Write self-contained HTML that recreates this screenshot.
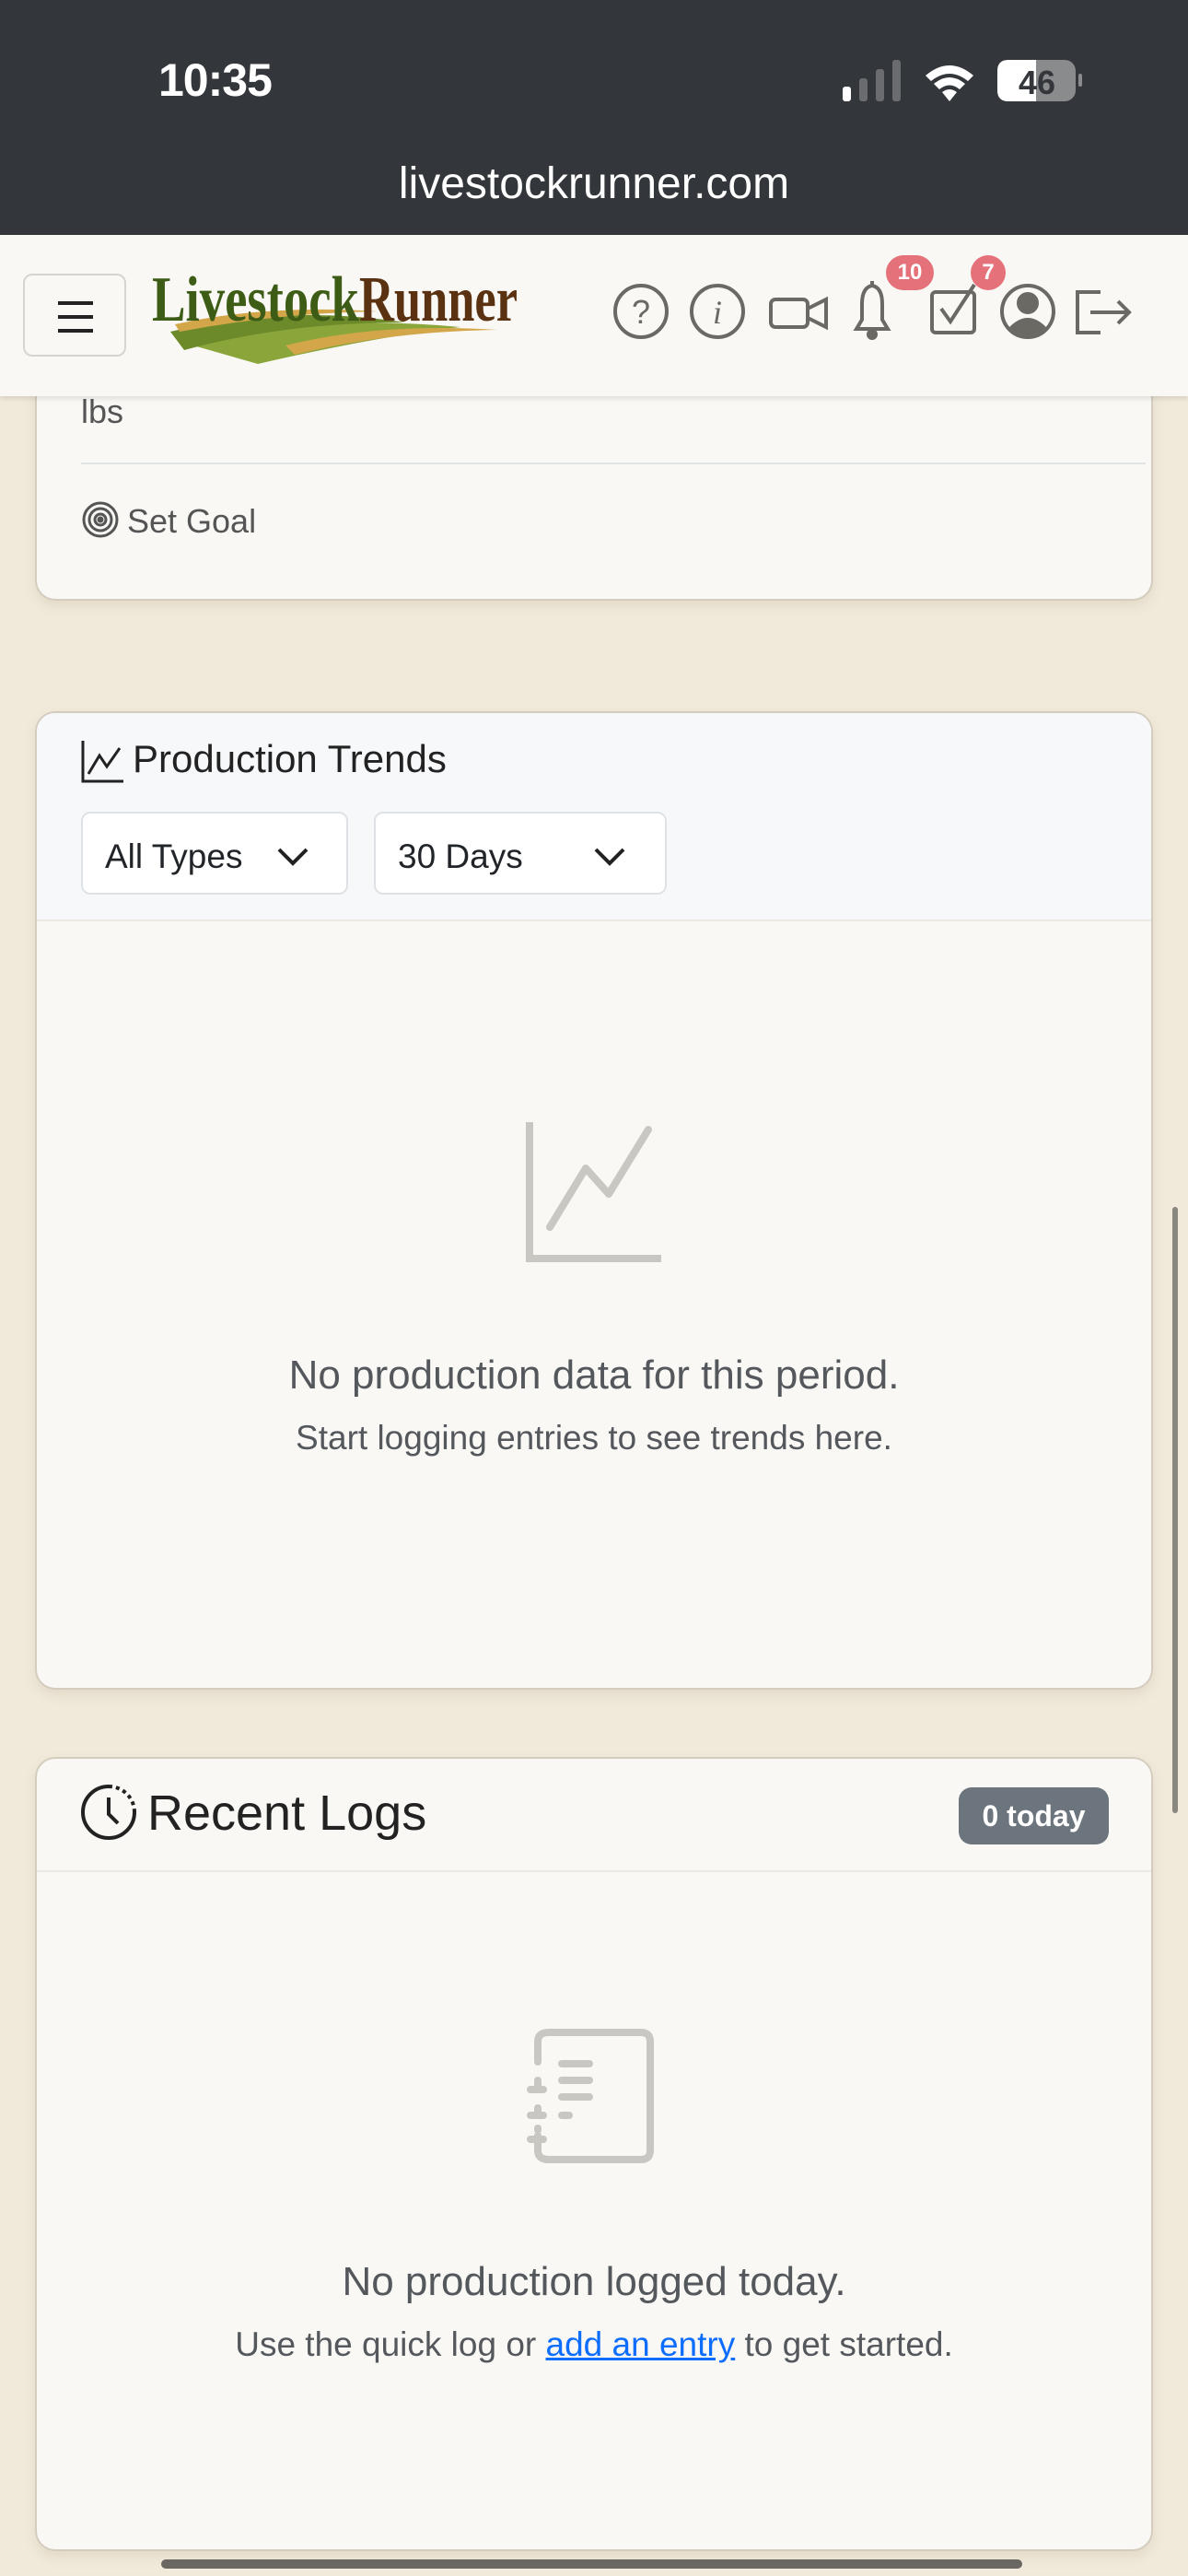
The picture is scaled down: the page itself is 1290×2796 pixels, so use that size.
<!DOCTYPE html>
<html><head><meta charset="utf-8"><style>
*{margin:0;padding:0;box-sizing:border-box}
body{width:1290px;height:2796px;background:#f1eadb;font-family:"Liberation Sans",sans-serif;position:relative;overflow:hidden;color:#212529}
.abs{position:absolute}
.card{position:absolute;left:38px;width:1214px;background:#f9f8f4;border:2px solid #d4cdbf;border-radius:22px;box-shadow:0 6px 14px rgba(120,100,60,.12);overflow:hidden}
.sel{position:absolute;top:881px;height:90px;background:#fff;border:2px solid #dee2e6;border-radius:10px;font-size:37px;color:#212529;padding:26px 0 0 24px}
.c{text-align:center;width:100%;left:0}
</style></head><body>
<div class="abs" style="left:0;top:0;width:1290px;height:255px;background:#33363a"></div>
<div class="abs" style="left:172px;top:58px;font-size:50px;color:#fff;font-weight:bold;letter-spacing:-1px">10:35</div>
<svg class="abs" style="left:910px;top:60px" width="270" height="60" viewBox="0 0 270 60">
<rect x="5" y="34" width="9" height="16" rx="3" fill="#fff"/>
<rect x="23" y="25" width="9" height="25" rx="3" fill="#6a6c6f"/>
<rect x="41" y="15" width="9" height="35" rx="3" fill="#6a6c6f"/>
<rect x="59" y="5" width="9" height="45" rx="3" fill="#6a6c6f"/>
<path d="M95 22 Q121 0 147 22 L141 28 Q121 12 101 28Z M104 31 Q121 17 138 31 L132 37 Q121 28 110 37Z M113 40 Q121 34 129 40 L121 50Z" fill="#fff"/>
<rect x="173" y="5" width="85" height="45" rx="12" fill="#8a8b8d"/>
<path d="M185 5 H215 V50 H185 Q173 50 173 38 V17 Q173 5 185 5Z" fill="#fff"/>
<rect x="261" y="20" width="4" height="14" rx="2" fill="#8a8b8d"/>
<text x="216" y="42" font-size="36" font-weight="bold" text-anchor="middle" fill="#33363a" font-family="Liberation Sans">46</text>
</svg>
<div class="abs c" style="top:172px;font-size:48px;color:#fff">livestockrunner.com</div>

<div class="abs" style="left:0;top:255px;width:1290px;height:175px;background:#f9f8f4;box-shadow:0 3px 5px rgba(0,0,0,.1);z-index:5">
 <div class="abs" style="left:25px;top:42px;width:112px;height:90px;border:2px solid #d6d4cf;border-radius:10px">
  <div class="abs" style="left:36px;top:28px;width:38px;height:4px;background:#222"></div>
  <div class="abs" style="left:36px;top:43px;width:38px;height:4px;background:#222"></div>
  <div class="abs" style="left:36px;top:58px;width:38px;height:4px;background:#222"></div>
 </div>
 <svg class="abs" style="left:160px;top:25px" width="410" height="120" viewBox="0 0 410 120">
  <path d="M50 95 Q180 60 340 75 Q250 85 120 115 Z" fill="#8aa63a"/>
  <path d="M25 80 Q150 50 280 70 Q150 70 40 100 Z" fill="#6d8a2a"/>
  <path d="M30 72 Q130 50 250 58 Q140 60 35 80Z" fill="#d4a64a"/>
  <path d="M150 95 Q250 70 380 78 Q260 80 160 105Z" fill="#d4a64a"/>
  <text x="5" y="68" font-family="Liberation Serif" font-weight="bold" font-size="70" fill="#3d5c15" textLength="225" lengthAdjust="spacingAndGlyphs">Livestock</text>
  <text x="230" y="68" font-family="Liberation Serif" font-weight="bold" font-size="70" fill="#5a3212" textLength="172" lengthAdjust="spacingAndGlyphs">Runner</text>
 </svg>
 <svg class="abs" style="left:660px;top:40px" width="580" height="110" viewBox="0 0 580 110" fill="none" stroke="#6b6963" stroke-width="4">
  <circle cx="36" cy="43" r="28"/><text x="36" y="56" font-size="36" text-anchor="middle" fill="#6b6963" stroke="none" font-family="Liberation Sans">?</text>
  <circle cx="119" cy="43" r="28"/><text x="119" y="56" font-size="36" font-style="italic" text-anchor="middle" fill="#6b6963" stroke="none" font-family="Liberation Serif">i</text>
  <rect x="177" y="30" width="40" height="30" rx="5"/><path d="M217 40 L237 30 V60 L217 50"/>
  <path d="M270 62 H304 L298 52 V35 Q298 17 287 15 Q276 17 276 35 V52 Z"/><circle cx="287" cy="68" r="4" fill="#6b6963"/><path d="M287 10 V15"/>
  <rect x="352" y="22" width="46" height="44" rx="4"/><path d="M362 40 L372 54 L398 14"/>
  <circle cx="456" cy="43" r="28"/><circle cx="456" cy="34" r="10" fill="#6b6963"/><path d="M437 62 Q456 42 475 62 Q456 76 437 62Z" fill="#6b6963"/>
  <path d="M535 22 H510 V66 H535 M524 44 H566 M554 32 L566 44 L554 56"/>
 </svg>
 <div class="abs" style="left:962px;top:22px;width:52px;height:38px;border-radius:19px;background:#e5717a;color:#fff;font-size:24px;font-weight:bold;text-align:center;line-height:38px">10</div>
 <div class="abs" style="left:1054px;top:22px;width:38px;height:38px;border-radius:19px;background:#e5717a;color:#fff;font-size:24px;font-weight:bold;text-align:center;line-height:38px">7</div>
</div>

<div class="card" style="top:300px;height:352px;border-top:none;border-radius:0 0 22px 22px">
 <div class="abs" style="left:48px;top:126px;font-size:36px;color:#555">lbs</div>
 <div class="abs" style="left:48px;top:202px;width:1156px;height:2px;background:#e2e3e5"></div>
 <svg class="abs" style="left:48px;top:243px" width="42" height="42" viewBox="0 0 42 42" fill="none" stroke="#555" stroke-width="3"><circle cx="21" cy="21" r="18"/><circle cx="21" cy="21" r="12"/><circle cx="21" cy="21" r="6"/><circle cx="21" cy="21" r="2" fill="#555"/></svg>
 <div class="abs" style="left:98px;top:245px;font-size:36px;color:#555">Set Goal</div>
</div>

<div class="card" style="top:772px;height:1062px">
 <div class="abs" style="left:0;top:0;width:1214px;height:226px;background:#f7f8fa;border-bottom:2px solid #ebe9e3"></div>
 <svg class="abs" style="left:48px;top:28px" width="48" height="48" viewBox="0 0 48 48" fill="none" stroke="#222" stroke-width="3"><path d="M2 2 V46 H46"/><path d="M8 38 L20 18 L28 30 L42 10"/></svg>
 <div class="abs" style="left:104px;top:26px;font-size:42px;color:#222">Production Trends</div>
</div>
<div class="sel" style="left:88px;width:290px">All Types<svg class="abs" style="left:210px;top:36px" width="36" height="22" viewBox="0 0 36 22" fill="none" stroke="#222" stroke-width="4"><path d="M3 3 L18 18 L33 3"/></svg></div>
<div class="sel" style="left:406px;width:318px">30 Days<svg class="abs" style="left:236px;top:36px" width="36" height="22" viewBox="0 0 36 22" fill="none" stroke="#222" stroke-width="4"><path d="M3 3 L18 18 L33 3"/></svg></div>
<svg class="abs" style="left:570px;top:1218px" width="150" height="154" viewBox="0 0 150 154" fill="none" stroke="#c8c7c2" stroke-width="8"><path d="M5 0 V148 H148"/><path d="M27 114 L66 50 L91 78 L134 8" stroke-linecap="round" stroke-linejoin="round"/></svg>
<div class="abs c" style="top:1468px;font-size:44px;color:#54585c">No production data for this period.</div>
<div class="abs c" style="top:1540px;font-size:37px;color:#54585c">Start logging entries to see trends here.</div>

<div class="card" style="top:1907px;height:862px">
 <div class="abs" style="left:0;top:121px;width:1214px;height:2px;background:#ebe9e3"></div>
 <svg class="abs" style="left:46px;top:26px" width="64" height="64" viewBox="0 0 64 64" fill="none" stroke="#222" stroke-width="4"><path d="M32 4 A28 28 0 1 0 60 32"/><path d="M32 4 A28 28 0 0 1 60 32" stroke-dasharray="4 4"/><path d="M32 16 V34 L42 44"/></svg>
 <div class="abs" style="left:120px;top:28px;font-size:54px;color:#222">Recent Logs</div>
 <div class="abs" style="left:1001px;top:31px;width:163px;height:62px;border-radius:14px;background:#6c757d;color:#fff;font-size:32px;font-weight:bold;text-align:center;line-height:62px">0 today</div>
</div>
<svg class="abs" style="left:570px;top:2200px" width="142" height="150" viewBox="0 0 142 150" fill="none" stroke="#c8c7c2" stroke-width="8" stroke-linecap="round"><path d="M14 38 V16 Q14 6 26 6 H126 Q136 6 136 16 V134 Q136 144 126 144 H26 Q14 144 14 134 V118"/><path d="M14 58 V68 M14 88 V94 M14 110 V112"/><path d="M6 68 H20 M6 96 H20 M6 122 H20"/><path d="M40 40 H70 M40 58 H70 M40 76 H70 M40 96 H48"/></svg>
<div class="abs c" style="top:2452px;font-size:44px;color:#54585c">No production logged today.</div>
<div class="abs c" style="top:2524px;font-size:37px;color:#54585c">Use the quick log or <span style="color:#0d6efd;text-decoration:underline">add an entry</span> to get started.</div>

<div class="abs" style="left:1273px;top:1310px;width:6px;height:658px;border-radius:3px;background:#8a8680"></div>
<div class="abs" style="left:175px;top:2778px;width:935px;height:10px;border-radius:5px;background:#6a6763"></div>
</body></html>
